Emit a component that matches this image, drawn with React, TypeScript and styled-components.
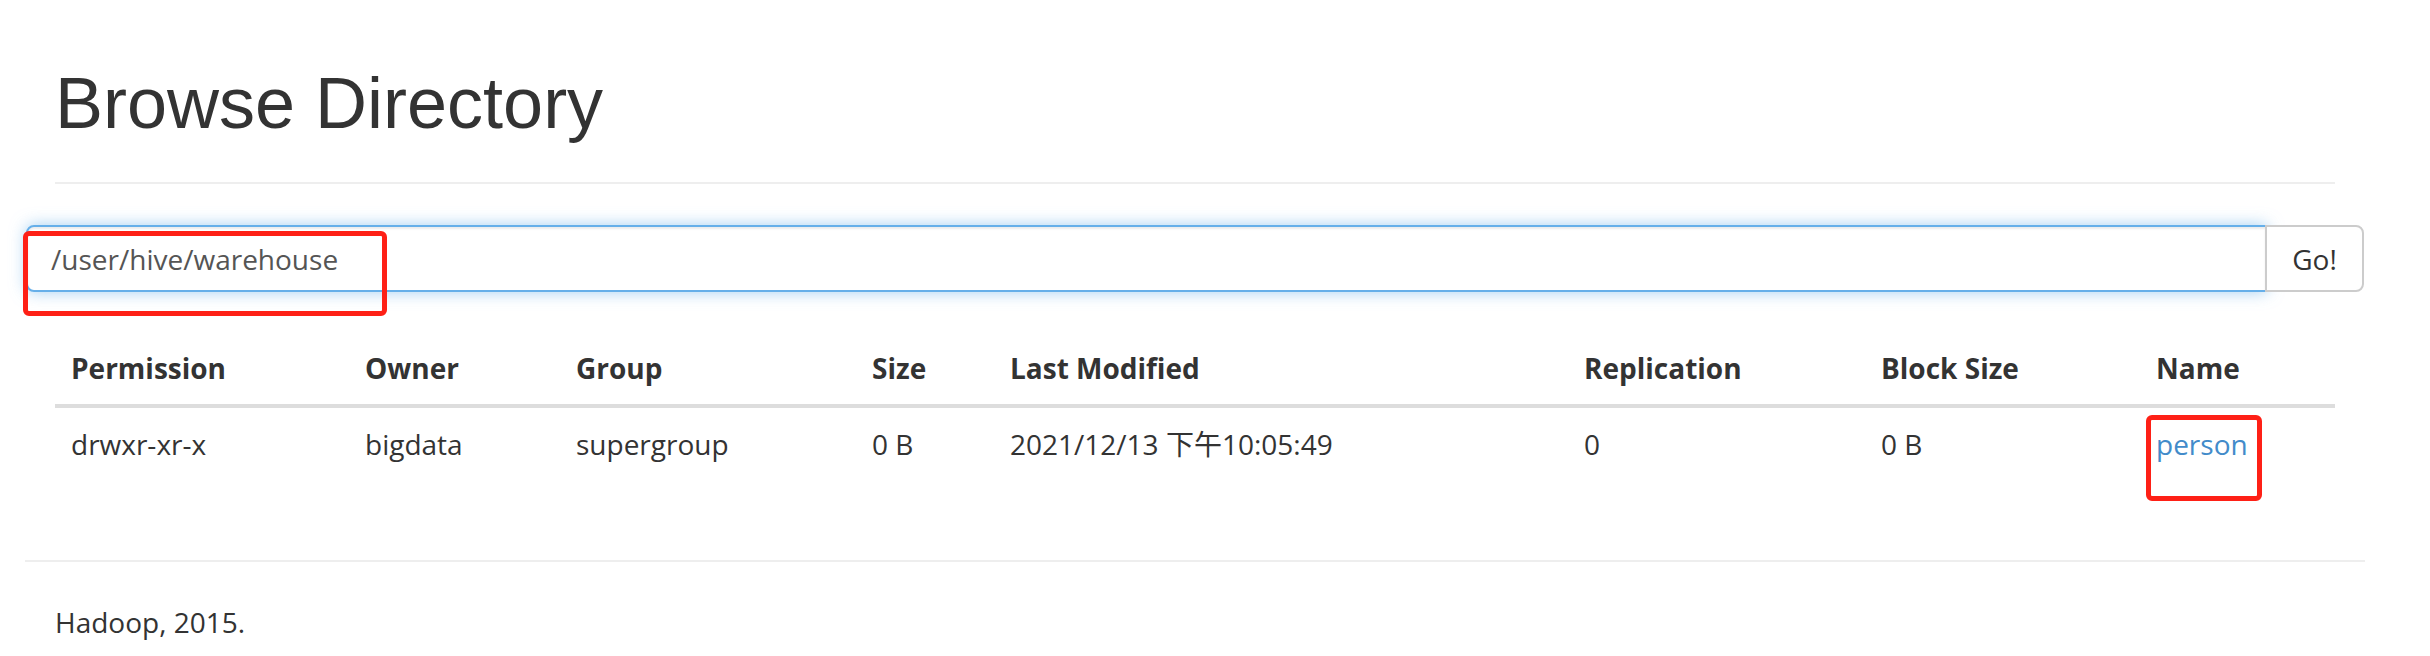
import React from "react";
import styled, { createGlobalStyle } from "styled-components";

const GlobalStyle = createGlobalStyle`
  html, body {
    margin: 0;
    padding: 0;
    background: #fff;
  }
  body {
    font-family: "Open Sans", "Noto Sans CJK SC", sans-serif;
    font-size: 28px;
    line-height: 40px;
    color: #333;
  }
  * { box-sizing: border-box; }
`;

const Page = styled.div`
  width: 2340px;
  margin-left: 25px;
`;

const PageHeader = styled.div`
  margin: 64px 30px 41px;
  padding-bottom: 19px;
  border-bottom: 2px solid #eee;
`;

const Title = styled.h1`
  margin: 0 0 20px;
  font-family: "Liberation Sans", Arial, sans-serif;
  font-weight: 400;
  font-size: 72px;
  line-height: 79.2px;
  color: #333;
`;

const InputGroup = styled.form`
  position: relative;
  display: flex;
  height: 67px;
  margin: 0 1px 40px;
`;

const PathInput = styled.input`
  flex: 1;
  min-width: 0;
  height: 100%;
  padding: 0 23px;
  font-family: "Open Sans", "Noto Sans CJK SC", sans-serif;
  font-size: 28px;
  color: #555;
  background: #fff;
  border: 2px solid #66afe9;
  border-radius: 8px 0 0 8px;
  outline: none;
  box-shadow: inset 0 2px 2px rgba(0, 0, 0, 0.075), 0 0 16px rgba(102, 175, 233, 0.6);
  position: relative;
  z-index: 1;
`;

const GoButton = styled.button`
  height: 100%;
  width: 99px;
  margin-left: -2px;
  padding: 0;
  font-family: "Open Sans", "Noto Sans CJK SC", sans-serif;
  font-size: 28px;
  color: #333;
  background: #fff;
  border: 2px solid #ccc;
  border-radius: 0 8px 8px 0;
  position: relative;
  z-index: 2;
`;

const Annotation = styled.div<{ $left: number; $top: number; $w: number; $h: number }>`
  position: absolute;
  left: ${(p) => p.$left}px;
  top: ${(p) => p.$top}px;
  width: ${(p) => p.$w}px;
  height: ${(p) => p.$h}px;
  border: 5px solid #fe2016;
  border-radius: 6px;
  pointer-events: none;
  z-index: 5;
`;

const TableWrap = styled.div`
  padding: 0 30px;
`;

const Table = styled.table`
  width: 2280px;
  border-collapse: collapse;
  table-layout: fixed;
`;

const HeaderCell = styled.th<{ $w: number }>`
  width: ${(p) => p.$w}px;
  padding: 16px;
  text-align: left;
  vertical-align: bottom;
  font-weight: 700;
  line-height: 40px;
  border-bottom: 4px solid #ddd;
  white-space: nowrap;
`;

const Cell = styled.td`
  position: relative;
  padding: 16px;
  line-height: 40px;
  vertical-align: top;
  white-space: nowrap;
`;

const NameLink = styled.a`
  color: #428bca;
  text-decoration: none;
`;

const FooterRule = styled.hr`
  margin: 80px 0 40px;
  border: 0;
  border-top: 2px solid #eee;
`;

const FooterText = styled.p`
  margin: 0;
  padding: 0 30px 14px;
`;

const columns: { label: string; width: number }[] = [
  { label: "Permission", width: 294 },
  { label: "Owner", width: 211 },
  { label: "Group", width: 296 },
  { label: "Size", width: 138 },
  { label: "Last Modified", width: 574 },
  { label: "Replication", width: 297 },
  { label: "Block Size", width: 275 },
  { label: "Name", width: 195 },
];

const row = ["drwxr-xr-x", "bigdata", "supergroup", "0 B", "2021/12/13 下午10:05:49", "0", "0 B"];

export default function App() {
  return (
    <>
      <GlobalStyle />
      <Page>
        <PageHeader>
          <Title>Browse Directory</Title>
        </PageHeader>
        <InputGroup onSubmit={(e) => e.preventDefault()}>
          <PathInput defaultValue="/user/hive/warehouse" />
          <GoButton type="submit">Go!</GoButton>
          <Annotation $left={-3} $top={6} $w={364} $h={85} />
        </InputGroup>
        <TableWrap>
          <Table>
            <thead>
              <tr>
                {columns.map((c) => (
                  <HeaderCell key={c.label} $w={c.width}>
                    {c.label}
                  </HeaderCell>
                ))}
              </tr>
            </thead>
            <tbody>
              <tr>
                {row.map((v, i) => (
                  <Cell key={i}>{v}</Cell>
                ))}
                <Cell>
                  <NameLink href="#">person</NameLink>
                  <Annotation $left={6} $top={7} $w={116} $h={86} />
                </Cell>
              </tr>
            </tbody>
          </Table>
        </TableWrap>
        <FooterRule />
        <FooterText>Hadoop, 2015.</FooterText>
      </Page>
    </>
  );
}
